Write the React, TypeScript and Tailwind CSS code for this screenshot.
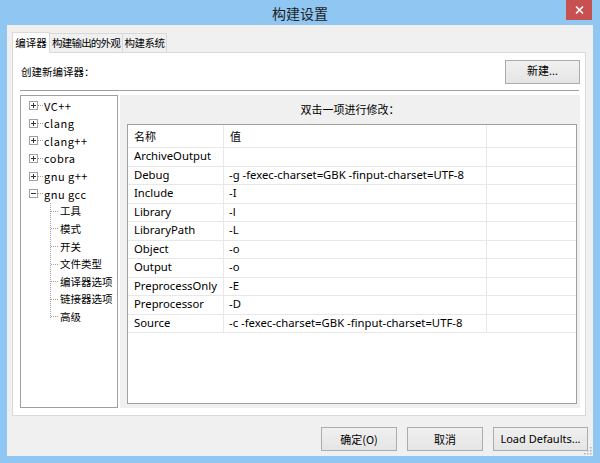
import React from 'react';

const rows: [string, string][] = [
  ['ArchiveOutput', ''],
  ['Debug', '-g -fexec-charset=GBK -finput-charset=UTF-8'],
  ['Include', '-I'],
  ['Library', '-l'],
  ['LibraryPath', '-L'],
  ['Object', '-o'],
  ['Output', '-o'],
  ['PreprocessOnly', '-E'],
  ['Preprocessor', '-D'],
  ['Source', '-c -fexec-charset=GBK -finput-charset=UTF-8'],
];

const roots = ['VC++', 'clang', 'clang++', 'cobra', 'gnu g++'];
const children = ['工具', '模式', '开关', '文件类型', '编译器选项', '链接器选项', '高级'];

const Expander = ({ open }: { open?: boolean }) => (
  <div className="flex items-center">
    <div className="w-[9px] h-[9px] border border-[#a0a0a0] bg-white flex items-center justify-center relative">
      <div className="w-[5px] h-px bg-[#333]" />
      {!open && <div className="absolute w-px h-[5px] bg-[#333]" />}
    </div>
    <div className="w-[5px] border-t border-dotted border-[#a0a0a0]" />
  </div>
);

const Button = ({ label, w }: { label: string; w: string }) => (
  <button
    className={`${w} h-[24px] border border-[#acacac] bg-gradient-to-b from-[#f0f0f0] to-[#e5e5e5] text-[11px] text-black flex items-center justify-center whitespace-nowrap`}
  >
    {label}
  </button>
);

export default function App() {
  return (
    <div className="w-[600px] h-[463px] bg-[#90c6f2] flex flex-col font-['Noto_Sans','Noto_Sans_CJK_SC',sans-serif] select-none">
      {/* Title bar */}
      <div className="h-[25px] relative flex items-center justify-center">
        <span className="text-[14px] text-[#1e1e1e] font-['Noto_Sans_CJK_SC',sans-serif] mt-[1px]">构建设置</span>
        <div className="absolute right-[8px] top-0 w-[26px] h-[20px] bg-[#c75050] flex items-center justify-center">
          <svg width="9" height="8" viewBox="0 0 9 8">
            <path d="M1 0.5 L8 7.5 M8 0.5 L1 7.5" stroke="white" strokeWidth="1.6" />
          </svg>
        </div>
      </div>

      {/* Client */}
      <div className="mx-[7px] mb-[7px] flex-1 bg-[#f0f0f0] flex flex-col pl-[5px] pr-[5px] pt-[7px] relative">
        {/* Tabs */}
        <div className="flex items-end h-[20px] text-[10.5px] font-['Noto_Sans_CJK_SC',sans-serif] text-black relative z-10 whitespace-nowrap">
          <div className="h-[21px] -mb-px w-[38px] bg-white border border-b-0 border-[#d9d9d9] flex items-center justify-center">编译器</div>
          <div className="h-[19px] w-[73px] bg-[#f0f0f0] border border-l-0 border-b-0 border-[#d9d9d9] flex items-center justify-center tracking-[-0.8px]">构建输出的外观</div>
          <div className="h-[19px] w-[44px] bg-[#f0f0f0] border border-l-0 border-b-0 border-[#d9d9d9] flex items-center justify-center tracking-[-0.5px]">构建系统</div>
        </div>

        {/* Tab panel */}
        <div className="w-[574px] h-[364px] bg-white border border-[#d9d9d9] flex flex-col pl-[7px] pr-[5px] pt-[6px] pb-[7px]">
          <div className="flex items-center justify-between h-[25px]">
            <span className="text-[10.5px] font-['Noto_Sans_CJK_SC',sans-serif] ml-[1px]">创建新编译器：</span>
            <Button label="新建..." w="w-[75px]" />
          </div>
          <div className="mt-[6px] mr-[1px] border-t border-[#a0a0a0] border-b border-b-white" />
          <div className="mt-[3px] flex flex-1 gap-[2px]">
            {/* Tree */}
            <div className="w-[98px] border border-[#a0a0a0] bg-white pt-[1px] text-[11px] font-['Noto_Sans_CJK_SC',sans-serif] text-black whitespace-nowrap">
              {roots.map((r) => (
                <div key={r} className="h-[17.6px] flex items-center pl-[8px] gap-[1px]">
                  <Expander />
                  <span className="tracking-[0.5px]">{r}</span>
                </div>
              ))}
              <div className="h-[17.6px] flex items-center pl-[8px] gap-[1px]">
                <Expander open />
                <span className="tracking-[0.5px]">gnu gcc</span>
              </div>
              <div className="relative">
                <div className="absolute left-[29px] top-0 h-[115px] border-l border-dotted border-[#a0a0a0]" />
                {children.map((c) => (
                  <div key={c} className="h-[17.6px] flex items-center pl-[30px] gap-[2px] text-[10.5px]">
                    <div className="w-[7px] border-t border-dotted border-[#a0a0a0]" />
                    <span>{c}</span>
                  </div>
                ))}
              </div>
            </div>

            {/* Right panel */}
            <div className="flex-1 bg-[#f0f0f0] flex flex-col pl-[7px] pr-[3px] pb-[4px]">
              <div className="h-[29px] flex items-center justify-center text-[11px] font-['Noto_Sans_CJK_SC',sans-serif] pr-[4px]">
                双击一项进行修改：
              </div>
              <div className="flex-1 bg-white border border-[#a0a0a0] text-[11.3px] text-black">
                <div className="flex h-[23px] border-b border-[#e8e8e8] font-['Noto_Sans_CJK_SC',sans-serif] text-[11px]">
                  <div className="w-[96px] border-r border-[#e8e8e8] flex items-center pl-[6px]">名称</div>
                  <div className="w-[263px] border-r border-[#e8e8e8] flex items-center pl-[6px]">值</div>
                  <div className="flex-1" />
                </div>
                {rows.map(([n, v]) => (
                  <div key={n} className="flex h-[18.5px] border-b border-[#e8e8e8]">
                    <div className="w-[96px] border-r border-[#e8e8e8] flex items-center pl-[6px] whitespace-nowrap">{n}</div>
                    <div className="w-[263px] border-r border-[#e8e8e8] flex items-center pl-[5px] whitespace-nowrap">{v}</div>
                    <div className="flex-1" />
                  </div>
                ))}
              </div>
            </div>
          </div>
        </div>

        {/* Bottom buttons */}
        <div className="flex justify-end gap-[10px] mt-[11px] font-['Noto_Sans_CJK_SC',sans-serif]">
          <Button label="确定(O)" w="w-[76px]" />
          <Button label="取消" w="w-[76px]" />
          <div className="font-['Noto_Sans',sans-serif]">
            <Button label="Load Defaults..." w="w-[95px]" />
          </div>
        </div>

        {/* Size grip */}
        <svg className="absolute right-[1px] bottom-[1px]" width="10" height="10" viewBox="0 0 10 10">
          {[[8, 8], [5, 8], [2, 8], [8, 5], [5, 5], [8, 2]].map(([x, y], i) => (
            <rect key={i} x={x} y={y} width="1.5" height="1.5" fill="#b0b0b0" />
          ))}
        </svg>
      </div>
    </div>
  );
}
